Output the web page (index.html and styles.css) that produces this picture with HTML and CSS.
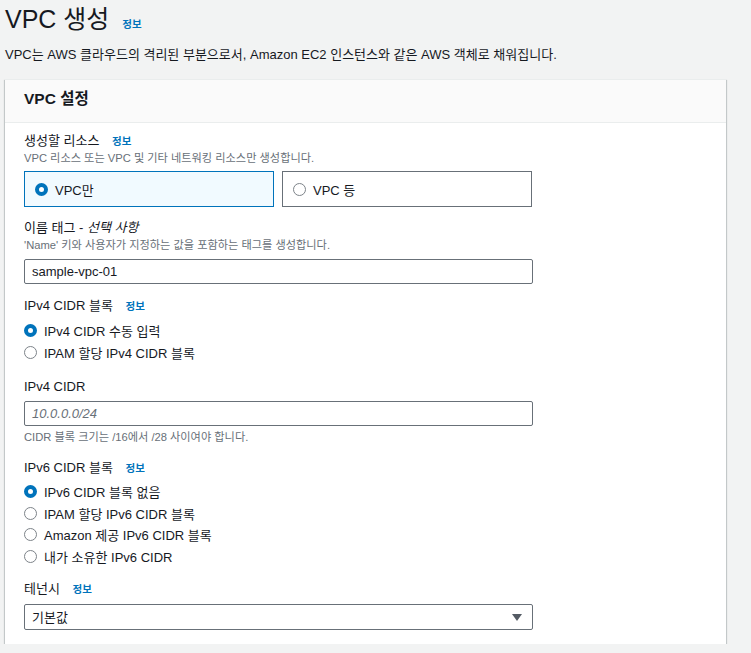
FILE: index.html
```html
<!DOCTYPE html>
<html lang="ko">
<head>
<meta charset="utf-8">
<link rel="stylesheet" href="styles.css">
</head>
<body>
<div class="page">
  <header class="page-head">
    <h1 class="title">VPC 생성</h1>
    <a class="info info-title">정보</a>
  </header>
  <p class="page-desc">VPC는 AWS 클라우드의 격리된 부분으로서, Amazon EC2 인스턴스와 같은 AWS 객체로 채워집니다.</p>

  <section class="card">
    <div class="card-head">VPC 설정</div>
    <div class="card-body">
      <div class="field f-resource">
        <div class="label">생성할 리소스 <a class="info">정보</a></div>
        <div class="desc">VPC 리소스 또는 VPC 및 기타 네트워킹 리소스만 생성합니다.</div>
        <div class="tiles">
          <div class="tile selected"><span class="radio on"></span><span>VPC만</span></div>
          <div class="tile"><span class="radio"></span><span>VPC 등</span></div>
        </div>
      </div>

      <div class="field f-name">
        <div class="label">이름 태그 - <i>선택 사항</i></div>
        <div class="desc">'Name' 키와 사용자가 지정하는 값을 포함하는 태그를 생성합니다.</div>
        <div class="input">sample-vpc-01</div>
      </div>

      <div class="field f-v4block">
        <div class="label">IPv4 CIDR 블록 <a class="info">정보</a></div>
        <div class="radios">
          <div class="opt"><span class="radio on"></span><span>IPv4 CIDR 수동 입력</span></div>
          <div class="opt"><span class="radio"></span><span>IPAM 할당 IPv4 CIDR 블록</span></div>
        </div>
      </div>

      <div class="field f-v4cidr">
        <div class="label">IPv4 CIDR</div>
        <div class="input placeholder">10.0.0.0/24</div>
        <div class="constraint">CIDR 블록 크기는 /16에서 /28 사이여야 합니다.</div>
      </div>

      <div class="field f-v6block">
        <div class="label">IPv6 CIDR 블록 <a class="info">정보</a></div>
        <div class="radios">
          <div class="opt"><span class="radio on"></span><span>IPv6 CIDR 블록 없음</span></div>
          <div class="opt"><span class="radio"></span><span>IPAM 할당 IPv6 CIDR 블록</span></div>
          <div class="opt"><span class="radio"></span><span>Amazon 제공 IPv6 CIDR 블록</span></div>
          <div class="opt"><span class="radio"></span><span>내가 소유한 IPv6 CIDR</span></div>
        </div>
      </div>

      <div class="field f-tenancy">
        <div class="label">테넌시 <a class="info">정보</a></div>
        <div class="select"><span>기본값</span><span class="caret"></span></div>
      </div>
    </div>
  </section>
</div>
</body>
</html>
```

FILE: styles.css
```css
* { box-sizing: border-box; }
html, body { margin: 0; padding: 0; }
body {
  background: #f2f3f3;
  color: #16191f;
  font-family: "Liberation Sans", "Noto Sans CJK KR", sans-serif;
  font-size: 13px;
}
.page { padding: 0 25px 0 5px; }

.page-head {
  display: flex;
  align-items: baseline;
  gap: 13px;
  height: 38px;
}
.title {
  margin: 0;
  font-size: 25px;
  font-weight: 400;
  line-height: 38px;
  height: 38px;
}
.info {
  color: #0073bb;
  font-size: 10.5px;
  font-weight: 700;
  margin-left: 9px;
}
.info-title { margin-left: 0; }

.page-desc {
  margin: 6px 0 0;
  line-height: 22px;
  height: 22px;
  font-size: 13px;
}

.card {
  margin-top: 13px;
  width: 721px;
  background: #fff;
  border-top: 1px solid #eaeded;
  box-shadow: 0 1px 1px 0 rgba(0,28,36,.3), 1px 1px 1px 0 rgba(0,28,36,.15), -1px 1px 1px 0 rgba(0,28,36,.15);
}
.card-head {
  background: #fafafa;
  border-bottom: 1px solid #eaeded;
  height: 43px;
  line-height: 38px;
  padding-left: 19px;
  font-size: 15.5px;
  font-weight: 700;
}
.card-body {
  padding: 9px 19px 14px;
  display: flex;
  flex-direction: column;
}
.field { display: flex; flex-direction: column; }
.label {
  line-height: 18px;
  height: 18px;
  font-size: 13px;
  white-space: nowrap;
}
.label i { font-style: italic; }
.desc, .constraint {
  font-size: 11.2px;
  line-height: 16px;
  height: 16px;
  color: #687078;
}
.tiles {
  display: flex;
  gap: 8px;
  margin-top: 5px;
}
.tile {
  width: 250px;
  height: 36px;
  border: 1px solid #687078;
  display: flex;
  align-items: center;
  gap: 7px;
  padding-left: 10px;
}
.tile.selected {
  background: #f1faff;
  border-color: #0073bb;
}
.radio {
  width: 13px;
  height: 13px;
  border-radius: 50%;
  border: 1.5px solid #7d8389;
  flex: none;
  background: #fff;
}
.radio.on {
  border: 4px solid #0073bb;
}
.input, .select {
  width: 509px;
  height: 25px;
  border: 1px solid #687078;
  border-radius: 2px;
  margin-top: 6px;
  padding-left: 7px;
  line-height: 23px;
  font-size: 13px;
}
.placeholder { color: #687078; font-style: italic; }
.constraint { margin-top: 3px; }

.radios { display: flex; flex-direction: column; }
.f-v4block .radios { margin-top: 5px; }
.f-v6block .radios { margin-top: 4px; }
.opt {
  height: 21.5px;
  display: flex;
  align-items: center;
  gap: 7px;
}

.f-name { margin-top: 12px; }
.f-v4block { margin-top: 13px; }
.f-v4cidr { margin-top: 15px; }
.f-v4cidr .input { margin-top: 5px; }
.f-v6block { margin-top: 14px; }
.f-tenancy { margin-top: 13px; }
.select {
  height: 26px;
  display: flex;
  align-items: center;
  justify-content: space-between;
  padding-right: 10px;
}
.caret {
  width: 0; height: 0;
  border-left: 5px solid transparent;
  border-right: 5px solid transparent;
  border-top: 7px solid #545b64;
}
```
